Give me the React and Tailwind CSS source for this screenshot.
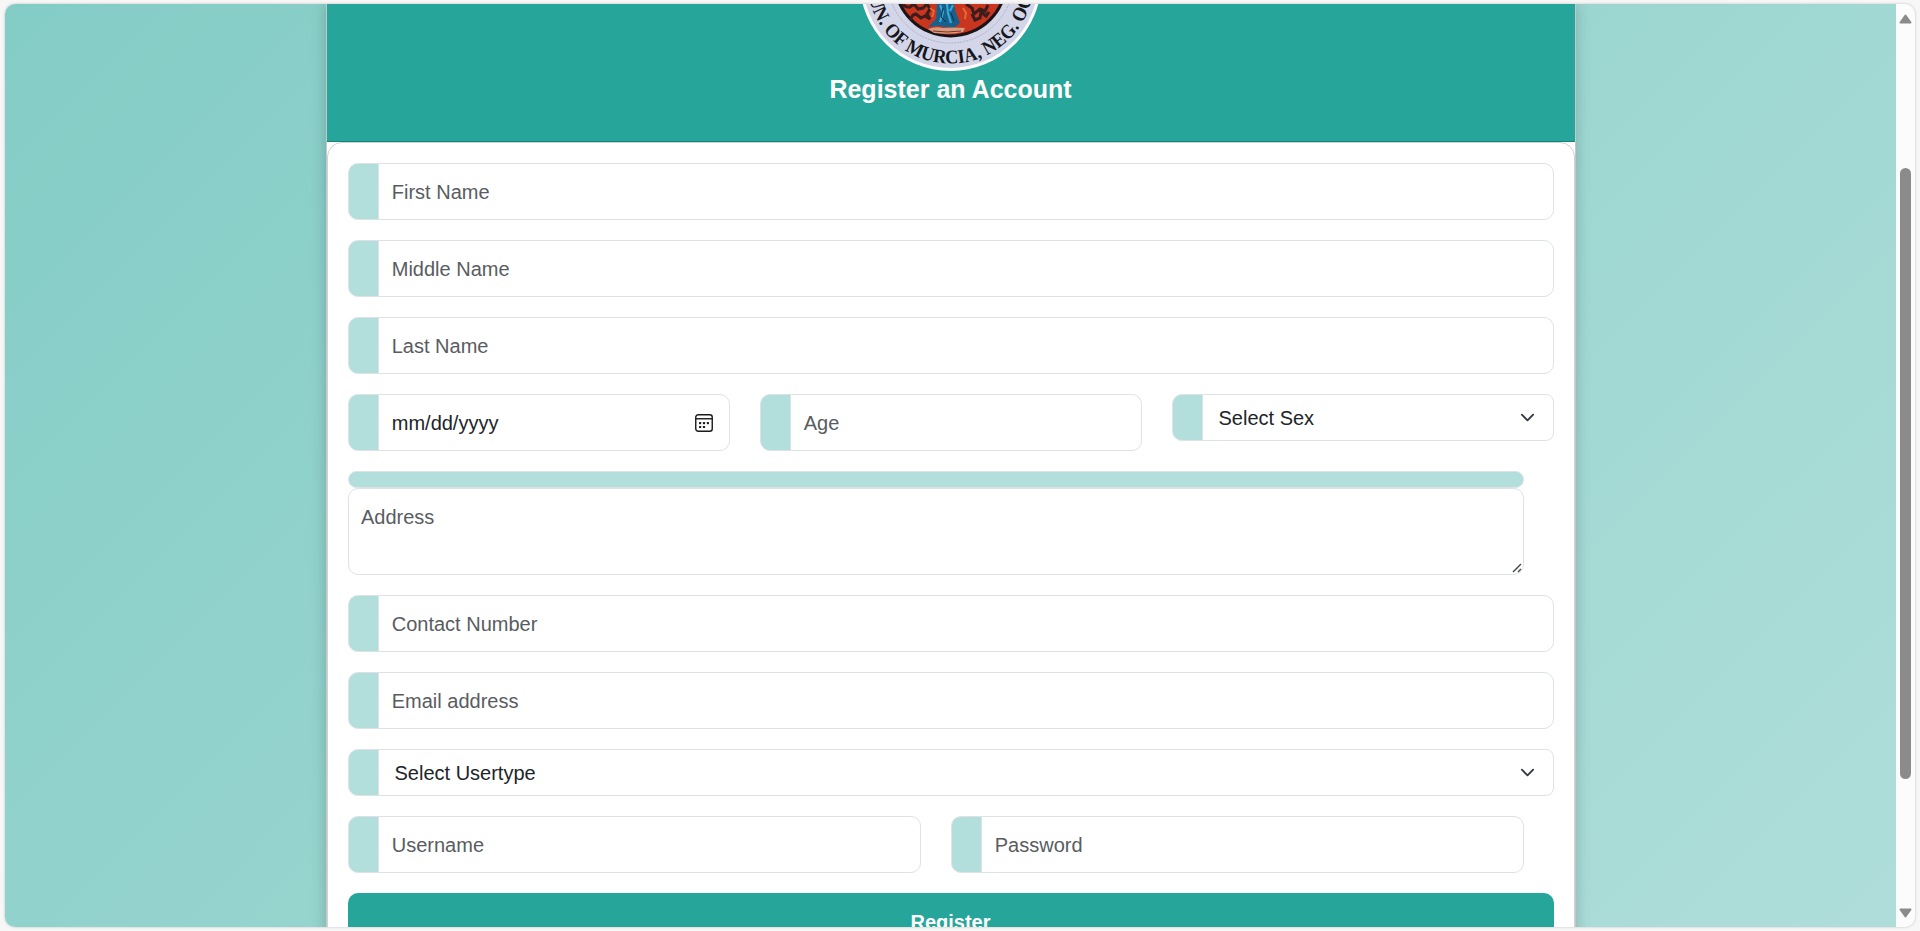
function Addon() {
  return <div className="w-[31px] shrink-0 rounded-l-[10px] border border-[#dee2e6] bg-[#b2dfdb]" />;
}

function Field({ label, dark = false, children }) {
  return (
    <div className="flex h-[57px]">
      <Addon />
      <div className={`-ml-px flex flex-1 items-center justify-between rounded-r-[10px] border border-[#dee2e6] bg-white pr-[15px] pl-[13.25px] ${dark ? "text-[#212529]" : "text-[#595c5f]"}`}>
        <span>{label}</span>
        {children}
      </div>
    </div>
  );
}

function Select({ label }) {
  return (
    <div className="flex h-[47px]">
      <Addon />
      <div className="-ml-px flex flex-1 items-center justify-between rounded-r-[8px] border border-[#dee2e6] bg-white pr-[17.5px] pl-4 text-[#212529]">
        <span>{label}</span>
        <svg className="size-[15px]" viewBox="0 0 16 16" fill="none" stroke="#343a40" strokeWidth="2" strokeLinecap="round" strokeLinejoin="round">
          <path d="m2 5 6 6 6-6" />
        </svg>
      </div>
    </div>
  );
}

function CalendarIcon() {
  return (
    <svg className="size-5" viewBox="0 0 20 20" fill="none" stroke="#1a1a1a" strokeWidth="1.4">
      <rect x="1.75" y="1.75" width="16.5" height="16.5" rx="2.5" />
      <path d="M2 5.75h16" />
      <g fill="#1a1a1a" stroke="none">
        <rect x="5" y="9" width="2.2" height="2.2" rx=".6" />
        <rect x="8.9" y="9" width="2.2" height="2.2" rx=".6" />
        <rect x="12.8" y="9" width="2.2" height="2.2" rx=".6" />
        <rect x="5" y="12.9" width="2.2" height="2.2" rx=".6" />
        <rect x="8.9" y="12.9" width="2.2" height="2.2" rx=".6" />
      </g>
    </svg>
  );
}

function Seal() {
  return (
    <svg className="h-[67px] w-[184px]" viewBox="859 4 184 67">
      <defs>
        <path id="ring" d="M867 -20a83.5 83.5 0 0 0 167 0" />
      </defs>
      <circle cx="950.5" cy="-20" r="91" fill="#fff" />
      <circle cx="950.5" cy="-20" r="88" fill="#d3d5e8" />
      <circle cx="950.5" cy="-20" r="63" fill="none" stroke="#a3a6b5" strokeWidth="0.7" strokeDasharray="2 1" />
      <circle cx="950.5" cy="-20" r="57.5" fill="#1a1418" />
      <circle cx="950.5" cy="-20" r="54.5" fill="#c8361f" />
      <path d="M902 4q5 4 8 3l4-3 4 5 5-1 4-4 3 5-3 5 3 5-5-3-4 2-5-4-3 1-3 5M966 4l6 4 2 6 6-5 5 2 3-6M972 14l3 6 5-2 1-6 5 4 3-4" fill="none" stroke="#3a1d1c" strokeWidth="3" />
      <path d="M930 8l4 3-2 6M963 8l3 5-1 6" fill="none" stroke="#e36a35" strokeWidth="2" />
      <path d="M937 4h17l2 9 4 10-6 5-18-2-8 1 8-8z" fill="#17608c" />
      <path d="M940 5l3 7-3 10M947 4l1 9 3 10M953 5l-3 6" fill="none" stroke="#38a9d4" strokeWidth="2.2" />
      <path d="M943 8l-2 9 5 5M951 13l3 8" fill="none" stroke="#0d2f4d" strokeWidth="1" />
      <path d="M928 29q8-3 15-1 10-1 22 0l-2 4q-13 3-29 1z" fill="#d99b7e" />
      <path d="M933 31q14 2 28 0" fill="none" stroke="#7a3324" strokeWidth="1" />
      <text fill="#15151c" fontFamily="Liberation Serif, serif" fontSize="19.5" fontWeight="700" textLength="226" lengthAdjust="spacingAndGlyphs">
        <textPath href="#ring" startOffset="18">UN. OF MURCIA, NEG. OC</textPath>
      </text>
    </svg>
  );
}

export default function App() {
  return (
    <div className="h-[931px] w-full overflow-hidden bg-[#f7f7f7] pt-1 pr-[5px] pb-1 pl-[5px] font-['Liberation_Sans',sans-serif] text-[20px] leading-[30px]">
      <div className="flex h-[923px] overflow-hidden rounded-[10px] bg-[#fcfcfc] shadow-[0_0_3px_rgba(0,0,0,0.22)]">
        <div className="flex w-[1891px] items-start justify-center overflow-hidden bg-[linear-gradient(135deg,#80cbc4,#b2dfdb)] bg-[length:1891px_1343px] bg-[position:0_-223px]">
          <main className="h-[1000px] w-[1250px] shrink-0 border-x border-[#c4c8c8] bg-white shadow-[0_0_14px_rgba(0,0,0,0.2)]">
            <header className="flex h-[138px] flex-col items-center border-b border-[#1c8278] bg-[#26a69a]">
              <Seal />
              <h1 className="mt-[3px] text-[25px] leading-[30px] font-bold text-white">Register an Account</h1>
            </header>
            <form className="flex flex-col gap-5 rounded-t-[15px] border border-[#ced0d2] px-5 pt-5">
              <Field label="First Name" />
              <Field label="Middle Name" />
              <Field label="Last Name" />
              <div className="grid grid-cols-3 items-start gap-[30px]">
                <Field label="mm/dd/yyyy" dark><CalendarIcon /></Field>
                <Field label="Age" />
                <Select label="Select Sex" />
              </div>
              <div className="mr-[30px]">
                <div className="h-[17px] rounded-[10px] border border-[#dee2e6] bg-[#b2dfdb]" />
                <div className="flex h-[87px] items-start justify-between rounded-[10px] border border-[#dee2e6] pt-[13px] pl-[12.5px] text-[#595c5f]">
                  <span>Address</span>
                  <svg className="mr-px mb-px size-[10px] self-end" viewBox="0 0 10 10" stroke="#444" strokeWidth="1.4">
                    <path d="M1 9 9 1M6 9l3-3" />
                  </svg>
                </div>
              </div>
              <Field label="Contact Number" />
              <Field label="Email address" />
              <Select label="Select Usertype" />
              <div className="mr-[30px] grid grid-cols-2 gap-[30px]">
                <Field label="Username" />
                <Field label="Password" />
              </div>
              <div className="flex h-[58px] items-center justify-center rounded-[10px] bg-[#26a69a] font-bold text-white">Register</div>
            </form>
          </main>
        </div>
        <div className="flex w-[19px] flex-col items-center pt-[10px] pb-[9px]">
          <svg className="h-[10px] w-[13px]" viewBox="0 0 13 10"><path d="M6.5 1.5 11.5 8.5h-10z" fill="#8b8b8b" stroke="#8b8b8b" strokeWidth="2" strokeLinejoin="round" /></svg>
          <div className="mt-36 h-[611px] w-[11px] rounded-full bg-[#8b8b8b]" />
          <svg className="mt-auto h-[10px] w-[13px]" viewBox="0 0 13 10"><path d="M6.5 8.5 1.5 1.5h10z" fill="#8b8b8b" stroke="#8b8b8b" strokeWidth="2" strokeLinejoin="round" /></svg>
        </div>
      </div>
    </div>
  );
}
